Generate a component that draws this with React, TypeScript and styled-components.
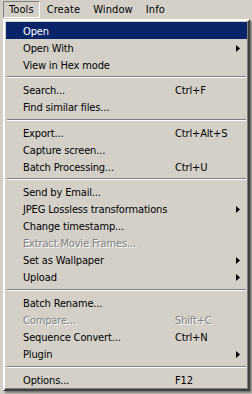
import React from 'react'
import styled, { createGlobalStyle } from 'styled-components'

const GlobalStyle = createGlobalStyle`
  html, body {
    margin: 0;
    padding: 0;
    background: #d4d0c8;
  }
  body {
    font-family: "DejaVu Sans Condensed", "Liberation Sans", Tahoma, sans-serif;
    font-size: 11px;
    letter-spacing: -0.15px;
    color: #000;
  }
`

const Screen = styled.div`
  width: 252px;
  height: 394px;
  overflow: hidden;
  background: #d4d0c8;
`

const MenuBar = styled.div`
  display: flex;
  height: 19px;
  padding: 1px 0 0 3px;
  box-sizing: border-box;
`

const BarItem = styled.div<{ $pressed?: boolean }>`
  height: 17px;
  line-height: 16px;
  padding: 0 5px;
  margin-right: 1px;
  box-sizing: border-box;
  border: 1px solid transparent;
  border-color: ${p => (p.$pressed ? '#808080 #fff #fff #808080' : 'transparent')};
  font-size: 11px;
  letter-spacing: 0.1px;
`

const Menu = styled.div`
  width: 247px;
  margin-left: 3px;
  box-sizing: border-box;
  padding: 1px;
  border: 2px solid;
  border-color: #fff #404040 #404040 #fff;
  box-shadow: inset -1px -1px 0 #808080, 2px 2px 2px rgba(0, 0, 0, 0.45);
  background: #d4d0c8;
`

const Item = styled.div<{ $active?: boolean; $disabled?: boolean }>`
  display: grid;
  grid-template-columns: 152px 1fr 12px;
  align-items: center;
  height: 17px;
  padding: 1px 7px 0 17px;
  box-sizing: border-box;
  font-size: 11px;
  background: ${p => (p.$active ? '#0a246a' : 'transparent')};
  color: ${p => (p.$active ? '#fff' : p.$disabled ? '#808080' : '#000')};
  text-shadow: ${p => (p.$disabled ? '1px 1px 0 #fff' : 'none')};
  white-space: nowrap;
`

const Label = styled.span``

const Shortcut = styled.span``

const Arrow = styled.svg`
  justify-self: end;
  display: block;
`

const Separator = styled.div<{ $tall?: boolean }>`
  height: ${p => (p.$tall ? 9 : 8)}px;
  display: flex;
  align-items: center;
  padding: 0 1px;
  &::after {
    content: '';
    flex: 1;
    border-top: 1px solid #808080;
    border-bottom: 1px solid #fff;
  }
`

type Entry =
  | { sep: true; tall?: boolean }
  | { label: string; shortcut?: string; sub?: boolean; disabled?: boolean; active?: boolean }

const entries: Entry[] = [
  { label: 'Open', active: true },
  { label: 'Open With', sub: true },
  { label: 'View in Hex mode' },
  { sep: true },
  { label: 'Search...', shortcut: 'Ctrl+F' },
  { label: 'Find similar files...' },
  { sep: true, tall: true },
  { label: 'Export...', shortcut: 'Ctrl+Alt+S' },
  { label: 'Capture screen...' },
  { label: 'Batch Processing...', shortcut: 'Ctrl+U' },
  { sep: true },
  { label: 'Send by Email...' },
  { label: 'JPEG Lossless transformations', sub: true },
  { label: 'Change timestamp...' },
  { label: 'Extract Movie Frames...', disabled: true },
  { label: 'Set as Wallpaper', sub: true },
  { label: 'Upload', sub: true },
  { sep: true, tall: true },
  { label: 'Batch Rename...' },
  { label: 'Compare...', shortcut: 'Shift+C', disabled: true },
  { label: 'Sequence Convert...', shortcut: 'Ctrl+N' },
  { label: 'Plugin', sub: true },
  { sep: true, tall: true },
  { label: 'Options...', shortcut: 'F12' },
]

const App = () => (
  <Screen>
    <GlobalStyle />
    <MenuBar>
      <BarItem $pressed>Tools</BarItem>
      <BarItem>Create</BarItem>
      <BarItem>Window</BarItem>
      <BarItem>Info</BarItem>
    </MenuBar>
    <Menu>
      {entries.map((e, i) =>
        'sep' in e ? (
          <Separator key={i} $tall={e.tall} />
        ) : (
          <Item key={i} $active={e.active} $disabled={e.disabled}>
            <Label>{e.label}</Label>
            <Shortcut>{e.shortcut}</Shortcut>
            {e.sub ? (
              <Arrow width="4" height="7" viewBox="0 0 4 7">
                <polygon points="0,0 4,3.5 0,7" fill={e.active ? '#fff' : '#000'} />
              </Arrow>
            ) : (
              <span />
            )}
          </Item>
        )
      )}
    </Menu>
  </Screen>
)

export default App
